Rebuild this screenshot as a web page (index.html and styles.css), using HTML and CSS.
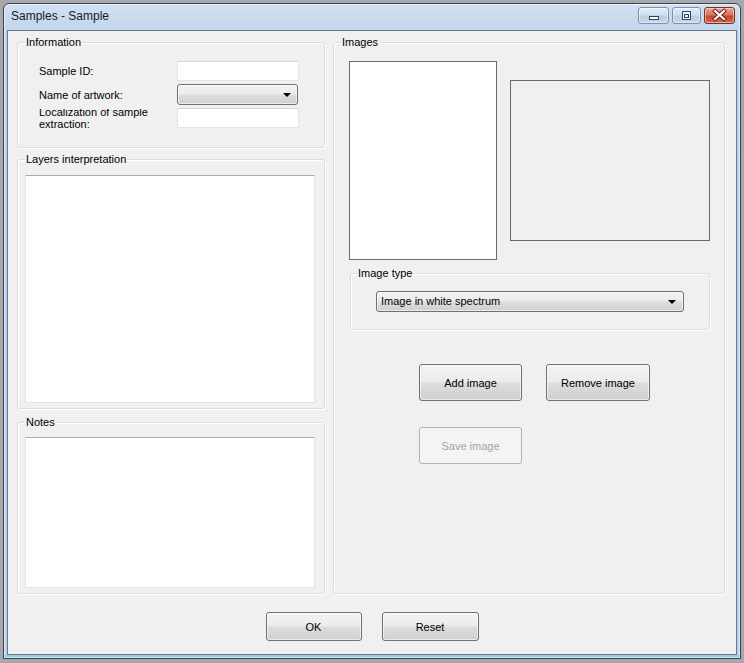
FILE: index.html
```html
<!DOCTYPE html>
<html>
<head>
<meta charset="utf-8">
<title>Samples - Sample</title>
<link rel="stylesheet" href="styles.css">
</head>
<body>
<div class="window">
  <div class="titlebar">
    <span class="title">Samples - Sample</span>
    <div class="caption-btns">
      <span class="cbtn cbtn-min">
        <svg width="31" height="17" viewBox="0 0 31 17"><rect x="11.5" y="9.5" width="9" height="3" fill="#fff" stroke="#33455e"/></svg>
      </span>
      <span class="cbtn cbtn-max">
        <svg width="29" height="17" viewBox="0 0 29 17"><rect x="10.5" y="4.5" width="8" height="8" fill="#eef3fa" stroke="#33455e"/><rect x="12.5" y="7.5" width="4" height="3" fill="none" stroke="#33455e"/></svg>
      </span>
      <span class="cbtn cbtn-close">
        <svg width="31" height="17" viewBox="0 0 31 17"><path d="M11 4 L20 12 M20 4 L11 12" stroke="#5a1d14" stroke-width="4" stroke-linecap="square"/><path d="M11 4 L20 12 M20 4 L11 12" stroke="#fff" stroke-width="2.2" stroke-linecap="square"/></svg>
      </span>
    </div>
  </div>
  <div class="client">
    <div class="main">
      <div class="left-col">
        <div class="group info">
          <span class="group-title">Information</span>
          <div class="form-grid">
            <span class="lbl">Sample ID:</span>
            <div class="textbox"></div>
            <span class="lbl">Name of artwork:</span>
            <div class="combo"><span class="arrow"></span></div>
            <span class="lbl lbl-clip"><span>Localization of sample extraction:</span></span>
            <div class="textbox"></div>
          </div>
        </div>
        <div class="group layers">
          <span class="group-title">Layers interpretation</span>
          <div class="textarea"></div>
        </div>
        <div class="group notes">
          <span class="group-title">Notes</span>
          <div class="textarea"></div>
        </div>
      </div>
      <div class="group images">
        <span class="group-title">Images</span>
        <div class="pics">
          <div class="picbox pic-main"></div>
          <div class="picbox pic-thumb"></div>
        </div>
        <div class="group imgtype">
          <span class="group-title">Image type</span>
          <div class="combo combo-wide"><span class="combo-text">Image in white spectrum</span><span class="arrow"></span></div>
        </div>
        <div class="btn-row">
          <button class="btn btn-add">Add image</button>
          <button class="btn btn-remove">Remove image</button>
        </div>
        <div class="btn-row btn-row2">
          <button class="btn btn-add" disabled>Save image</button>
        </div>
      </div>
    </div>
    <div class="footer">
      <button class="btn btn-ok">OK</button>
      <button class="btn btn-reset">Reset</button>
    </div>
  </div>
</div>
</body>
</html>
```
FILE: styles.css
```css
* { box-sizing: border-box; }
html, body { margin: 0; padding: 0; }
body {
  width: 744px;
  height: 663px;
  background: #a6a8ab;
  font-family: "Liberation Sans", Arial, sans-serif;
  font-size: 11px;
  color: #000;
  overflow: hidden;
}
.window {
  margin: 3px 0 0 3px;
  width: 738px;
  height: 656px;
  border: 1px solid #3a4450;
  border-radius: 6px 6px 0 0;
  background: linear-gradient(180deg, #d2e1f2 0px, #bed3eb 30px, #bbd0e9 100%);
  padding: 0 3px 3px 3px;
  display: flex;
  flex-direction: column;
  box-shadow: inset 0 0 0 1px rgba(255,255,255,0.55), inset 0 -3px 0 0 #8fd0e6;
}
.titlebar {
  height: 26px;
  display: flex;
  align-items: flex-start;
  justify-content: space-between;
  padding-left: 4px;
}
.title {
  font-family: "Liberation Sans", Arial, sans-serif;
  font-size: 12px;
  line-height: 14px;
  margin-top: 5px;
  color: #1b1b1b;
}
.caption-btns {
  display: flex;
  margin-top: 3px;
  margin-right: 2px;
}
.cbtn {
  display: block;
  height: 17px;
  border: 1px solid #7b91b0;
  border-radius: 3px;
  background: linear-gradient(180deg, #e3ecf7 0%, #d0deee 45%, #bccde4 55%, #c7d7eb 100%);
  box-shadow: inset 0 0 0 1px rgba(255,255,255,0.45);
  overflow: hidden;
}
.cbtn svg { display: block; margin: -1px; }
.cbtn-min { width: 31px; }
.cbtn-max { width: 29px; margin-left: 3px; }
.cbtn-close {
  width: 31px;
  margin-left: 3px;
  border-color: #7a2f24;
  background: linear-gradient(180deg, #e9a798 0%, #d9735f 45%, #c7462f 55%, #d66a4f 100%);
}
.client {
  height: 625px;
  border: 1px solid #6d7987;
  background: #f0f0f0;
  padding: 11px 0 0 9px;
}
.main {
  display: grid;
  grid-template-columns: 308px 392px;
  column-gap: 8px;
  height: 552px;
}
.left-col {
  display: flex;
  flex-direction: column;
}
.group {
  position: relative;
  border: 1px solid #d5dfe5;
  border-radius: 3px;
  box-shadow: inset 1px 1px 0 #fff, 1px 1px 0 #fff;
}
.group-title {
  position: absolute;
  top: -7px;
  left: 7px;
  padding: 0 1px;
  line-height: 13px;
  background: #f0f0f0;
  color: #000;
  white-space: nowrap;
}
.info {
  height: 106px;
  padding: 18px 0 0 21px;
}
.form-grid {
  display: grid;
  grid-template-columns: 138px 122px;
  grid-template-rows: 20px 21px 20px;
  row-gap: 3px;
  align-items: center;
}
.lbl { line-height: 12px; }
.lbl-clip {
  height: 19px;
  width: 124px;
  overflow: hidden;
  display: flex;
  align-items: center;
  line-height: 12px;
}
.textbox {
  height: 20px;
  width: 122px;
  background: #fff;
  border: 1px solid #e2e4ea;
  border-top-color: #d3d5dc;
}
.combo {
  position: relative;
  height: 21px;
  width: 121px;
  border: 1px solid #707070;
  border-radius: 3px;
  background: linear-gradient(180deg, #f3f3f3 0%, #ebebeb 48%, #dddddd 52%, #cfcfcf 100%);
  box-shadow: inset 0 0 0 1px rgba(255,255,255,0.6);
  display: flex;
  align-items: center;
}
.arrow {
  position: absolute;
  right: 6px;
  top: 8px;
  width: 0;
  height: 0;
  border-left: 4px solid transparent;
  border-right: 4px solid transparent;
  border-top: 4px solid #000;
}
.layers {
  margin-top: 11px;
  height: 250px;
  padding: 15px 9px 5px 7px;
  display: flex;
}
.notes {
  margin-top: 13px;
  height: 172px;
  padding: 14px 9px 5px 7px;
  display: flex;
}
.textarea {
  flex: 1;
  background: #fff;
  border: 1px solid #e2e4ea;
  border-top-color: #a9abb2;
}
.images {
  height: 552px;
  padding: 18px 0 0 15px;
}
.pics {
  display: flex;
  align-items: flex-start;
}
.picbox { border: 1px solid #6a6a6a; }
.pic-main {
  width: 148px;
  height: 199px;
  background: #fff;
}
.pic-thumb {
  width: 200px;
  height: 161px;
  margin: 19px 0 0 13px;
  background: #f0f0f0;
}
.imgtype {
  margin: 13px 0 0 1px;
  width: 360px;
  height: 57px;
  padding: 17px 0 0 25px;
}
.imgtype .group-title { left: 6px; }
.combo-wide { width: 308px; }
.combo-text { padding-left: 4px; line-height: 13px; }
.combo-wide .arrow { right: 7px; }
.btn-row {
  display: flex;
  gap: 24px;
  margin: 34px 0 0 70px;
}
.btn-row2 { margin-top: 26px; }
.btn {
  font-family: "Liberation Sans", Arial, sans-serif;
  font-size: 11px;
  color: #000;
  border: 1px solid #707070;
  border-radius: 3px;
  background: linear-gradient(180deg, #f3f3f3 0%, #ebebeb 48%, #dddddd 52%, #cfcfcf 100%);
  box-shadow: inset 0 0 0 1px rgba(255,255,255,0.6);
  padding: 0;
  margin: 0;
  text-align: center;
}
.btn-add { width: 103px; height: 37px; }
.btn-remove { width: 104px; height: 37px; }
.btn:disabled {
  border-color: #adb2b5;
  background: #f4f4f4;
  color: #a3a3a3;
  box-shadow: none;
}
.footer {
  display: flex;
  justify-content: center;
  gap: 20px;
  margin-top: 18px;
  padding-right: 9px;
}
.btn-ok { width: 96px; height: 29px; }
.btn-reset { width: 97px; height: 29px; }
```
